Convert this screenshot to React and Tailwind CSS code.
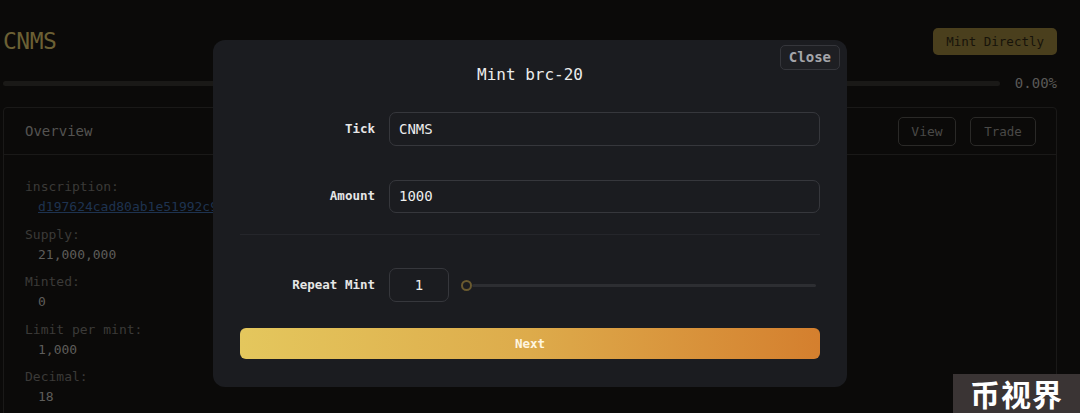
import React from "react";

const mono = { fontFamily: '"DejaVu Sans Mono", "Liberation Mono", monospace' };

function Field({ label, value }) {
  return (
    <div className="flex flex-col">
      <div className="h-[20px] leading-[20px] text-[13px] text-[#3b3a38]">{label}</div>
      <div className="h-[20px] leading-[20px] text-[13px] text-[#5e5d5a] pl-[13px]">{value}</div>
    </div>
  );
}

export default function App() {
  return (
    <div className="relative w-[1080px] h-[413px] overflow-hidden bg-[#0b0a09]" style={mono}>
      {/* underlying page */}
      <div className="ml-[3px] w-[1054px] pt-[28px]">
        <div className="flex items-center justify-between h-[27px]">
          <div className="text-[23px] leading-[27px] text-[#6c6034] tracking-[-0.5px]">CNMS</div>
          <div className="h-[27px] px-[13px] rounded-[5px] bg-[#4a3f1d] text-[#17130a] text-[12.5px] leading-[27px]">
            Mint Directly
          </div>
        </div>
        <div className="flex items-center mt-[19px] h-[18px]">
          <div className="w-[997px] h-[5px] rounded-full bg-[#1a1917]" />
          <div className="ml-auto text-[14px] text-[#5a5957]">0.00%</div>
        </div>
        <div className="mt-[15px] border border-[#1a1918] rounded-[4px] h-[330px]">
          <div className="flex items-center h-[47px] pl-[21px] pr-[20px] border-b border-[#1a1918]">
            <div className="text-[14px] text-[#545351]">Overview</div>
            <div className="ml-auto flex gap-[14px]">
              <div className="w-[58px] h-[29px] rounded-[5px] border border-[#2a2927] text-[13px] leading-[27px] text-center text-[#4a4947]">
                View
              </div>
              <div className="w-[66px] h-[29px] rounded-[5px] border border-[#2a2927] text-[12.5px] leading-[27px] text-center text-[#4a4947]">
                Trade
              </div>
            </div>
          </div>
          <div className="pl-[21px] pt-[22px] flex flex-col gap-[7.5px]">
            <div className="flex flex-col">
              <div className="h-[20px] leading-[20px] text-[13px] text-[#3b3a38]">inscription:</div>
              <div className="h-[20px] leading-[20px] text-[13px] text-[#1e3350] underline pl-[13px] whitespace-nowrap">
                d197624cad80ab1e51992c9e4b0a3f
              </div>
            </div>
            <Field label="Supply:" value="21,000,000" />
            <Field label="Minted:" value="0" />
            <Field label="Limit per mint:" value="1,000" />
            <Field label="Decimal:" value="18" />
          </div>
        </div>
      </div>

      {/* modal */}
      <div className="absolute left-[213px] top-[40px] w-[634px] h-[347px] rounded-[12px] bg-[#1b1c20] px-[27px]">
        <div className="absolute right-[7px] top-[5px] h-[25px] px-[8px] rounded-[5px] border border-[#35363b] bg-[#1e1f23] text-[14px] leading-[23px] text-[#a4a5aa] font-bold">
          Close
        </div>
        <div className="pt-[24px] h-[72px] text-center text-[16px] leading-[22px] text-[#ececec]">Mint brc-20</div>
        <div className="flex items-center h-[34px]">
          <div className="w-[149px] shrink-0 pr-[14px] text-right text-[12.5px] text-[#e6e6e6] font-bold">Tick</div>
          <div className="flex-1 h-[34px] rounded-[7px] border border-[#36373c] pl-[9px] text-[14px] leading-[32px] text-[#eeeeee]">
            CNMS
          </div>
        </div>
        <div className="flex items-center h-[33px] mt-[34px]">
          <div className="w-[149px] shrink-0 pr-[14px] text-right text-[12.5px] text-[#e6e6e6] font-bold">Amount</div>
          <div className="flex-1 h-[33px] rounded-[7px] border border-[#36373c] pl-[9px] text-[14px] leading-[31px] text-[#eeeeee]">
            1000
          </div>
        </div>
        <div className="mt-[21px] h-px bg-[#25262b]" />
        <div className="flex items-center h-[34px] mt-[33px]">
          <div className="w-[149px] shrink-0 pr-[14px] text-right text-[12.5px] text-[#e6e6e6] font-bold whitespace-nowrap">Repeat Mint</div>
          <div className="w-[60px] h-[34px] rounded-[7px] border border-[#36373c] text-center text-[14px] leading-[32px] text-[#eeeeee]">
            1
          </div>
          <div className="flex-1 flex items-center ml-[12px] mr-[4px]">
            <div className="w-[11px] h-[11px] shrink-0 rounded-full border-2 border-[#6a5a2f] bg-[#1b1c20]" />
            <div className="flex-1 h-[3px] rounded-full bg-[#2d2e32]" />
          </div>
        </div>
        <div className="mt-[26px] h-[31px] rounded-[6px] bg-gradient-to-r from-[#e4c75d] via-[#ddab4b] to-[#d47f2e] text-center text-[12.5px] leading-[31px] text-[#fff6e0] font-bold">
          Next
        </div>
      </div>

      {/* watermark */}
      <div
        className="absolute right-0 bottom-0 w-[127px] h-[39px] bg-[#3a3434] text-white text-[30px] leading-[39px] font-bold text-center tracking-[1px]"
        style={{ fontFamily: '"Noto Sans CJK SC", sans-serif' }}
      >
        币视界
      </div>
    </div>
  );
}
